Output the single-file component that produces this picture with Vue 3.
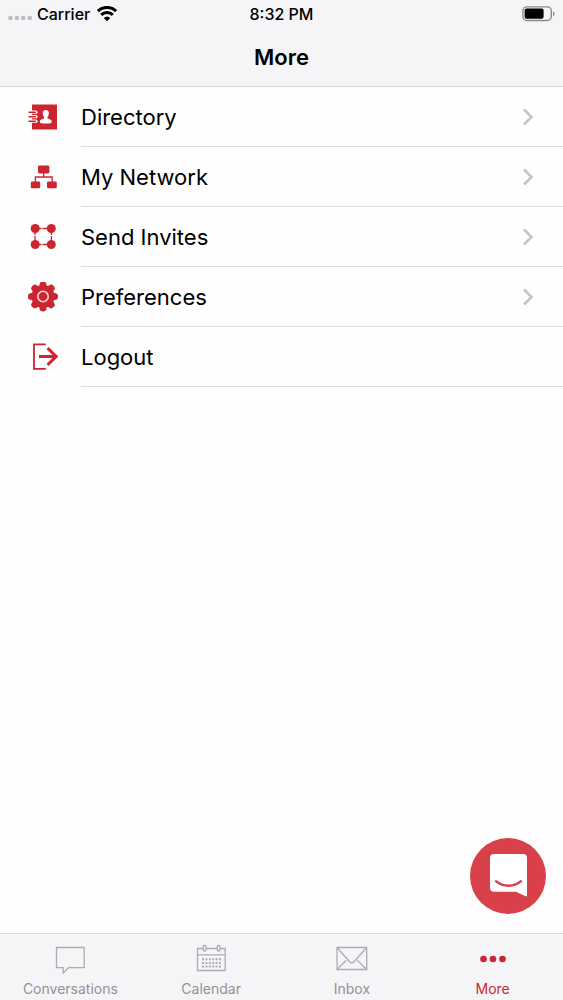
<template>
  <div class="screen">
    <header class="header">
      <div class="status-bar">
        <div class="carrier">
          <svg class="signal" width="25" height="6" viewBox="0 0 25 6">
            <circle v-for="n in 4" :key="n" :cx="n * 6.4 - 3.9" cy="3" r="2.3" />
          </svg>
          <span>Carrier</span>
          <svg class="wifi" width="22" height="16" viewBox="0 0 22 16">
            <path d="M1.9 5.1a13 13 0 0 1 18.2 0" />
            <path d="M5.2 8.9a8.3 8.3 0 0 1 11.6 0" />
            <path class="wifi-base" d="M11 15.3 7.7 12a4.8 4.8 0 0 1 6.6 0z" />
          </svg>
        </div>
        <span class="time">8:32 PM</span>
        <div class="power">
          <svg width="33" height="16" viewBox="0 0 33 16">
            <rect class="battery-shell" x="0.9" y="0.9" width="28.4" height="13.6" rx="4" />
            <rect x="2.6" y="2.6" width="19" height="10.2" rx="2" />
            <path class="battery-tip" d="M31 5.2c2 .8 2 4.2 0 5z" />
          </svg>
        </div>
      </div>
      <h1 class="title">More</h1>
    </header>

    <main class="content">
      <ul class="menu">
        <li v-for="item in menuItems" :key="item.id">
          <button type="button" class="menu-button">
            <svg class="menu-icon" width="32" height="31" viewBox="0 0 32 31">
              <g v-if="item.id === 'directory'">
                <rect class="fill" x="5" y="2.5" width="25" height="25" />
                <g v-for="y in [10.2, 14.7, 19.2]" :key="y">
                  <path class="ring-gap" :d="`M9 ${y}H4`" />
                  <path class="ring" :d="`M8.4 ${y}H2`" />
                </g>
                <path
                  class="person"
                  d="M18.8 8c-2.1 0-3.2 1.5-3.1 3.5.1 1.6.7 2.8 1.5 3.5v1.3c-2.4.8-4.4 1.7-4.4 3.6 0 1.1 2.6 1.6 6 1.6s6-.5 6-1.6c0-1.9-2-2.8-4.4-3.6V15c.8-.7 1.4-1.9 1.5-3.5.1-2-1-3.5-3.1-3.5z"
                />
              </g>
              <g v-else-if="item.id === 'network'">
                <rect class="fill" x="11" y="3.5" width="11.4" height="8" rx="1.4" />
                <rect class="fill" x="3.8" y="19.5" width="9.4" height="6.8" rx="1.4" />
                <rect class="fill" x="20" y="19.5" width="9.8" height="6.8" rx="1.4" />
                <path class="line" d="M16.7 11v4M8.4 20v-5h16.8v5" />
              </g>
              <g v-else-if="item.id === 'invites'">
                <path class="dashes" d="M8 6.5h16.4M8 22.5h16.4M8 6.5v16M24.4 6.5v16" />
                <circle class="fill" cx="8.2" cy="6.5" r="4.5" />
                <circle class="fill" cx="24.3" cy="6.5" r="4.5" />
                <circle class="fill" cx="8.2" cy="22.5" r="4.5" />
                <circle class="fill" cx="24.3" cy="22.5" r="4.5" />
              </g>
              <g v-else-if="item.id === 'preferences'">
                <circle class="fill" cx="16" cy="14.5" r="11.4" />
                <path
                  v-for="n in 8"
                  :key="n"
                  class="fill"
                  :transform="`rotate(${n * 45} 16 14.5)`"
                  d="M10.800 5C12.600 4.100 12.500 3 12.700 1.700 13 .1 14.200-.5 16-.5s3 .6 3.300 2.200c.2 1.300.1 2.400 1.900 3.300z"
                />
                <circle class="gear-hole" cx="16" cy="14.5" r="5.2" />
              </g>
              <g v-else>
                <path class="bracket" d="M18.800 2.300H7v24.600h11.800" />
                <path class="arrow" d="M12 14.500h17M20.600 6.100l8.600 8.400-8.600 8.400" />
              </g>
            </svg>
            <span class="menu-label">
              {{ item.label }}
              <svg v-if="item.chevron" class="chevron" width="12" height="18" viewBox="0 0 12 18">
                <path d="M2 1.500 9.500 9 2 16.500" />
              </svg>
            </span>
          </button>
        </li>
      </ul>

      <button type="button" class="chat-button" aria-label="Open chat">
        <svg width="76" height="76" viewBox="0 0 76 76">
          <path
            class="chat-face"
            d="M24 16h29a4 4 0 0 1 4 4v38.500c-4-1.200-7.500-3-11-4.700H24a4 4 0 0 1-4-4V20a4 4 0 0 1 4-4z"
          />
          <path class="chat-smile" d="M26 43.200c7 6.100 18 6.100 25 0" />
        </svg>
      </button>
    </main>

    <nav class="tab-bar">
      <a
        v-for="tab in tabs"
        :key="tab.id"
        href="#"
        class="tab"
        :class="{ active: tab.id === activeTab }"
        @click.prevent="activeTab = tab.id"
      >
        <svg class="tab-icon" width="32" height="32" viewBox="0 0 32 32">
          <path v-if="tab.id === 'conversations'" d="M2.500 4.500h27.700v20.200H14.400L9.200 30v-5.300H2.500z" />
          <g v-else-if="tab.id === 'calendar'">
            <path d="M7.800 5.500H2.500v22h27.700v-22h-4.700M11.500 5.500h10.300M2.500 11.800h27.700" />
            <rect x="8.200" y="2.500" width="2.800" height="5.500" rx="1.200" />
            <rect x="22.200" y="2.500" width="2.800" height="5.500" rx="1.200" />
            <path class="days" d="M7 16.300h19M7 19.900h19M7 23.500h19" />
          </g>
          <path
            v-else-if="tab.id === 'inbox'"
            d="M1 4.500h29.700v22H1zM1 4.500l12.600 14.200c1.400 1.500 3 1.500 4.400 0L30.700 4.500M1 26.500l9.300-9.300M30.700 26.500l-9.500-9.300"
          />
          <g v-else>
            <circle class="dot" cx="6.500" cy="16" r="3.300" />
            <circle class="dot" cx="16" cy="16" r="3.300" />
            <circle class="dot" cx="25.500" cy="16" r="3.300" />
          </g>
        </svg>
        <span>{{ tab.label }}</span>
      </a>
    </nav>
  </div>
</template>

<script setup>
import { ref } from "vue";

const menuItems = [
  { id: "directory", label: "Directory", chevron: true },
  { id: "network", label: "My Network", chevron: true },
  { id: "invites", label: "Send Invites", chevron: true },
  { id: "preferences", label: "Preferences", chevron: true },
  { id: "logout", label: "Logout", chevron: false },
];

const tabs = [
  { id: "conversations", label: "Conversations" },
  { id: "calendar", label: "Calendar" },
  { id: "inbox", label: "Inbox" },
  { id: "more", label: "More" },
];

const activeTab = ref("more");
</script>

<style>
body {
  background-color: #fefefe;
}
</style>

<style scoped>
.screen {
  display: flex;
  flex-direction: column;
  min-height: 100vh;
  font-family: Inter, "Liberation Sans", sans-serif;
  color: #000;
}

.header {
  background-color: #f5f4f7;
  border-bottom: 1px solid #d9d8dc;
}

.status-bar {
  display: grid;
  grid-template-columns: 1fr auto 1fr;
  align-items: center;
  height: 28px;
  padding: 0 8px;
  font-size: 16px;
  font-weight: 500;
}

.carrier {
  display: flex;
  align-items: center;
  gap: 4px;
}

.signal {
  fill: #bdbcc0;
  margin-top: 8px;
}

.wifi {
  margin-left: 2px;
  fill: none;
  stroke: #000;
  stroke-width: 3;
}

.wifi-base {
  fill: #000;
  stroke: none;
}

.power {
  display: flex;
  justify-content: flex-end;
}

.battery-shell {
  fill: none;
  stroke: #8a898c;
  stroke-width: 1.4;
}

.battery-tip {
  fill: #8a898c;
}

.title {
  margin: 0;
  height: 58px;
  line-height: 58px;
  font-size: 22px;
  font-weight: 600;
  text-align: center;
}

.content {
  position: relative;
  flex: 1;
}

.menu {
  list-style: none;
  margin: 0;
  padding: 0;
}

.menu-button {
  display: flex;
  align-items: center;
  gap: 22px;
  width: 100%;
  height: 60px;
  padding: 0 0 0 27px;
  border: none;
  background: none;
  color: inherit;
  font-family: inherit;
  font-size: 22px;
  text-align: left;
  cursor: pointer;
}

.menu-icon {
  flex: none;
}

.menu-label {
  display: flex;
  flex: 1;
  align-items: center;
  justify-content: space-between;
  box-sizing: border-box;
  height: 60px;
  padding-right: 29px;
  border-bottom: 1px solid #dddce0;
}

.fill {
  fill: #cb2630;
}

.ring-gap {
  fill: none;
  stroke: #fefefe;
  stroke-width: 3.2;
  stroke-linecap: round;
}

.ring {
  fill: none;
  stroke: #cb2630;
  stroke-width: 1.4;
  stroke-linecap: round;
}

.person {
  fill: #fefefe;
}

.line {
  fill: none;
  stroke: #cb2630;
  stroke-width: 1.3;
}

.dashes {
  fill: none;
  stroke: #cb2630;
  stroke-width: 1.3;
  stroke-dasharray: 6.5 1;
}

.gear-hole {
  fill: none;
  stroke: #f8d5d6;
  stroke-width: 1.6;
}

.bracket {
  fill: none;
  stroke: #cb2630;
  stroke-width: 1.8;
}

.arrow {
  fill: none;
  stroke: #d9222b;
  stroke-width: 3;
}

.chevron {
  fill: none;
  stroke: #c5c4c8;
  stroke-width: 2.6;
}

.chat-button {
  position: absolute;
  right: 17px;
  bottom: 19px;
  width: 76px;
  height: 76px;
  padding: 0;
  border: none;
  border-radius: 50%;
  background-color: #d9404a;
  cursor: pointer;
}

.chat-button svg {
  display: block;
}

.chat-face {
  fill: #fff;
}

.chat-smile {
  fill: none;
  stroke: #d9404a;
  stroke-width: 2.4;
  stroke-linecap: round;
}

.tab-bar {
  display: grid;
  grid-template-columns: repeat(4, 1fr);
  height: 67px;
  box-sizing: border-box;
  border-top: 1px solid #d9d8dc;
  background-color: #f5f4f7;
}

.tab {
  display: flex;
  flex-direction: column;
  align-items: center;
  gap: 6px;
  padding-top: 9px;
  color: #939296;
  font-size: 14px;
  line-height: 16px;
  text-decoration: none;
}

.tab-icon {
  fill: none;
  stroke: #adacb0;
  stroke-width: 1.3;
}

.days {
  stroke-width: 2;
  stroke-dasharray: 2 1.4;
}

.active {
  color: #cb2630;
}

.dot {
  fill: #cb2630;
  stroke: none;
}
</style>
